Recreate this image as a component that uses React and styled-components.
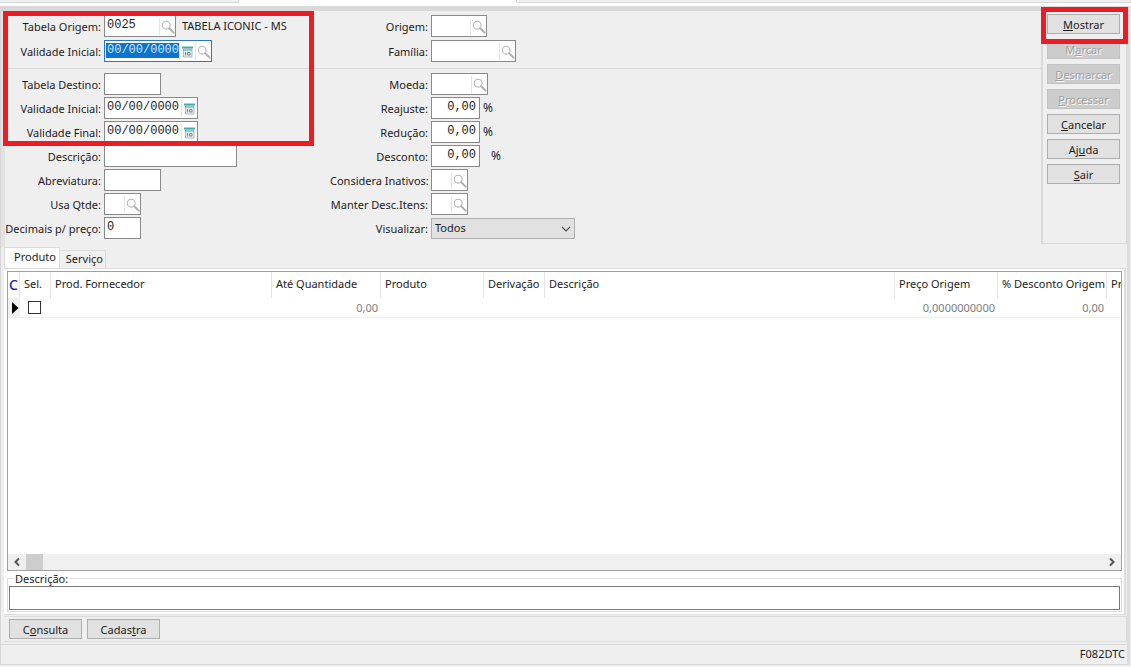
import React, { useState } from "react";
import styled, { createGlobalStyle } from "styled-components";

const GlobalStyle = createGlobalStyle`
  * {
    box-sizing: border-box;
  }
  body {
    margin: 0;
    background: #efefef;
    color: #1c1c1c;
    font-family: "Noto Sans", "Open Sans", sans-serif;
    font-size: 11px;
    line-height: 16px;
  }
  input, button, select {
    font: inherit;
    color: inherit;
    margin: 0;
    border-radius: 0;
  }
`;

const LoupeIcon = () => (
  <svg width="14" height="14" viewBox="0 0 14 14" fill="none" aria-hidden="true">
    <circle cx="5.2" cy="5.2" r="3.9" stroke="#b4b4b4" strokeWidth="1.1" />
    <path d="M8.2 8.2 L12.6 12.6" stroke="#b0b0b0" strokeWidth="2" strokeLinecap="round" />
  </svg>
);

const CalendarIcon = () => (
  <svg width="11" height="12" viewBox="0 0 11 12" aria-hidden="true">
    <path d="M0 .5h11v2H0z" fill="#3fb0b0" />
    <path d="M1.500 2.500h8.500v8.500H1.500z" fill="#e9f0f2" stroke="#a3bccb" strokeWidth="1" />
    <path d="M1 4h9" stroke="#3fa5a8" strokeWidth="1" />
    <path d="M3.500 6v3.500M5.500 6.500h2.500v2.500h-2.500z" fill="none" stroke="#76878f" strokeWidth="1" />
  </svg>
);

const ChevronIcon = ({ d, weight = 2 }) => (
  <svg width="10" height="10" viewBox="0 0 10 10" fill="none" aria-hidden="true">
    <path d={d} stroke="#555" strokeWidth={weight} />
  </svg>
);

function Field({ id, label, value = "", width, icons = [], right, focused, children }) {
  return (
    <Row>
      <Label htmlFor={id}>{label}</Label>
      <Box $width={width} $focused={focused}>
        <TextInput id={id} defaultValue={value} $right={right} $focused={focused} size="1" />
        {icons.map((icon) => (
          <IconButton key={icon} type="button" aria-label={icon}>
            {icon === "Calendário" ? <CalendarIcon /> : <LoupeIcon />}
          </IconButton>
        ))}
      </Box>
      {children}
    </Row>
  );
}

const FIND = ["Pesquisar"];
const DATE = ["Calendário"];

const actions = [
  ["", "M", "ostrar"],
  ["M", "a", "rcar", true],
  ["", "D", "esmarcar", true],
  ["", "P", "rocessar", true],
  ["", "C", "ancelar"],
  ["Aj", "u", "da"],
  ["", "S", "air"],
];

const columns = [
  ["Sel.", 31],
  ["Prod. Fornecedor", 221],
  ["Até Quantidade", 109],
  ["Produto", 103],
  ["Derivação", 61],
  ["Descrição", undefined],
  ["Preço Origem", 103],
  ["% Desconto Origem", 109],
  ["Pr", 14],
];

export default function App() {
  const [tab, setTab] = useState("Produto");
  return (
    <>
      <GlobalStyle />
      <Page>
        <WindowTabs>
          <span />
          <span />
          <span />
        </WindowTabs>
        <Window>
          <Top>
            <Form>
              <Section>
                <Column $label={96} $gap={3}>
                  <Field id="origem" label="Tabela Origem:" value="0025" width={72} icons={FIND}>
                    <Note>TABELA ICONIC - MS</Note>
                  </Field>
                  <Field
                    id="validade"
                    label="Validade Inicial:"
                    value="00/00/0000"
                    width={108}
                    icons={["Calendário", "Pesquisar"]}
                    focused
                  />
                </Column>
                <Column $label={98} $gap={3}>
                  <Field id="orig" label="Origem:" width={56} icons={FIND} />
                  <Field id="familia" label="Família:" width={85} icons={FIND} />
                </Column>
              </Section>
              <Section>
                <Column $label={96} $gap={2}>
                  <Field id="destino" label="Tabela Destino:" width={57} />
                  <Field id="inicial" label="Validade Inicial:" value="00/00/0000" width={94} icons={DATE} />
                  <Field id="final" label="Validade Final:" value="00/00/0000" width={94} icons={DATE} />
                  <Field id="descricao" label="Descrição:" width={133} />
                  <Field id="abreviatura" label="Abreviatura:" width={57} />
                  <Field id="qtde" label="Usa Qtde:" width={37} icons={FIND} />
                  <Field id="decimais" label="Decimais p/ preço:" value="0" width={37} />
                </Column>
                <Column $label={98} $gap={2}>
                  <Field id="moeda" label="Moeda:" width={57} icons={FIND} />
                  <Field id="reajuste" label="Reajuste:" value="0,00" width={49} right>
                    <Percent>%</Percent>
                  </Field>
                  <Field id="reducao" label="Redução:" value="0,00" width={49} right>
                    <Percent>%</Percent>
                  </Field>
                  <Field id="desconto" label="Desconto:" value="0,00" width={49} right>
                    <Percent $far>%</Percent>
                  </Field>
                  <Field id="inativos" label="Considera Inativos:" width={37} icons={FIND} />
                  <Field id="manter" label="Manter Desc.Itens:" width={37} icons={FIND} />
                  <Row>
                    <Label htmlFor="visualizar">Visualizar:</Label>
                    <SelectBox>
                      <Select id="visualizar">
                        <option>Todos</option>
                      </Select>
                      <ChevronIcon d="M1 3l4 4 4-4" weight={1.2} />
                    </SelectBox>
                  </Row>
                </Column>
              </Section>
              <FormMark />
            </Form>
            <Actions>
              {actions.map(([before, key, after, disabled]) => (
                <Button key={key + after} type="button" disabled={disabled}>
                  {before}
                  <u>{key}</u>
                  {after}
                </Button>
              ))}
              <ActionMark />
            </Actions>
          </Top>

          <Tabs role="tablist">
            {["Produto", "Serviço"].map((name) => (
              <Tab
                key={name}
                type="button"
                role="tab"
                aria-selected={tab === name}
                $active={tab === name}
                onClick={() => setTab(name)}
              >
                {name}
              </Tab>
            ))}
          </Tabs>

          <TabPanel>
            <Grid>
              <Table>
                <colgroup>
                  <col width="12" />
                  {columns.map(([name, width]) => (
                    <col key={name} width={width} />
                  ))}
                </colgroup>
                <thead>
                  <tr>
                    <Corner>C</Corner>
                    {columns.map(([name]) => (
                      <th key={name}>{name}</th>
                    ))}
                  </tr>
                </thead>
                <tbody>
                  <tr>
                    <Marker>
                      <svg width="7" height="12" viewBox="0 0 7 12" aria-hidden="true">
                        <path d="M0 0l6.500 6L0 12z" fill="#000" />
                      </svg>
                    </Marker>
                    <td>
                      <Check type="checkbox" aria-label="Sel." />
                    </td>
                    <td />
                    <Amount>0,00</Amount>
                    <td />
                    <td />
                    <td />
                    <Amount>0,0000000000</Amount>
                    <Amount>0,00</Amount>
                    <td />
                  </tr>
                </tbody>
              </Table>
              <ScrollBar>
                <ScrollArrow type="button" aria-label="Rolar para a esquerda">
                  <ChevronIcon d="M7 1.500L3.500 5l3.500 3.500" />
                </ScrollArrow>
                <Thumb />
                <ScrollArrow type="button" aria-label="Rolar para a direita">
                  <ChevronIcon d="M3 1.500l3.500 3.500-3.500 3.500" />
                </ScrollArrow>
              </ScrollBar>
            </Grid>
            <Details>
              <legend>
                <label htmlFor="detalhe">Descrição:</label>
              </legend>
              <input id="detalhe" />
            </Details>
          </TabPanel>

          <Footer>
            <Button type="button">
              C<u>o</u>nsulta
            </Button>
            <Button type="button">
              Cadas<u>t</u>ra
            </Button>
          </Footer>
          <Status>F082DTC</Status>
        </Window>
      </Page>
    </>
  );
}

const Page = styled.div`
  display: flex;
  flex-direction: column;
  min-height: 100vh;
  padding-bottom: 2px;
`;

const WindowTabs = styled.div`
  display: grid;
  grid-template-columns: 239px 278px 1fr;
  height: 6px;
  padding-bottom: 3px;
  background: #fff;
  span {
    background: #f0f0f0;
    border-bottom: 1px solid #d9d9d9;
    border-right: 1px solid #d9d9d9;
  }
  span:nth-child(2) {
    background: #fff;
    border-bottom-color: #fff;
  }
`;

const Window = styled.main`
  flex: 1;
  display: flex;
  flex-direction: column;
  margin-right: 1px;
  border: 1px solid #d6d6d6;
  border-top: 5px solid #d9d9d9;
  border-right: 3px solid #dcdcdc;
`;

const Top = styled.div`
  display: flex;
  height: 236px;
  border-left: 4px solid #e2e2e2;
`;

const Form = styled.form`
  flex: 1;
  position: relative;
  padding-top: 4px;
`;

const Section = styled.div`
  display: grid;
  grid-template-columns: 325px 1fr;
  & + & {
    margin-top: 6px;
    padding-top: 4px;
    border-top: 1px solid #d9d9d9;
  }
`;

const Column = styled.div`
  display: grid;
  row-gap: ${({ $gap }) => $gap}px;
  align-content: start;
  label {
    width: ${({ $label }) => $label}px;
  }
`;

const Row = styled.div`
  display: flex;
  align-items: center;
  gap: 3px;
  height: 22px;
`;

const Label = styled.label`
  flex: none;
  padding-top: 1px;
  text-align: right;
  white-space: nowrap;
`;

const Box = styled.div`
  display: flex;
  width: ${({ $width }) => $width}px;
  height: 22px;
  padding: 2px 0 1px 1px;
  background: #fff;
  border: 1px solid ${({ $focused }) => ($focused ? "#2a78c0" : "#8a8a8a")};
`;

const TextInput = styled.input`
  && {
    flex: 1;
    min-width: 0;
    width: 0;
    height: 15px;
    padding: 0 ${({ $right }) => ($right ? 3 : 0)}px 0 1px;
    border: 0;
    outline: 0;
    font-family: "Liberation Mono", monospace;
    font-size: 12px;
    line-height: 15px;
    text-align: ${({ $right }) => ($right ? "right" : "left")};
    background: ${({ $focused }) => ($focused ? "#0a74cf" : "transparent")};
    color: ${({ $focused }) => ($focused ? "#cfe6fa" : "#222")};
  }
`;

const IconButton = styled.button`
  display: flex;
  align-items: center;
  justify-content: center;
  flex: none;
  width: 16px;
  padding: 0;
  border: 0;
  border-left: 1px solid #e6e6e6;
  background: #fff;
`;

const Note = styled.span`
  margin-left: 3px;
`;

const Percent = styled.span`
  margin-left: ${({ $far }) => ($far ? 8 : 0)}px;
  font-size: 12px;
`;

const SelectBox = styled.div`
  position: relative;
  width: 144px;
  svg {
    position: absolute;
    right: 4px;
    top: 6px;
    pointer-events: none;
  }
`;

const Select = styled.select`
  display: block;
  appearance: none;
  width: 100%;
  height: 21px;
  padding: 0 3px;
  border: 1px solid #adadad;
  background: #e1e1e1;
`;

const Mark = styled.div`
  position: absolute;
  border: 5px solid #ec1c24;
  pointer-events: none;
`;

const FormMark = styled(Mark)`
  top: 0;
  left: -2px;
  width: 311px;
  height: 135px;
`;

const ActionMark = styled(Mark)`
  top: -4px;
  left: -2px;
  right: -2px;
  height: 37px;
`;

const Actions = styled.div`
  position: relative;
  display: flex;
  flex-direction: column;
  gap: 5px;
  width: 86px;
  height: 233px;
  padding: 3px 6px 0 4px;
  border-left: 2px solid #d9d9d9;
  border-right: 1px solid #d9d9d9;
  border-bottom: 1px solid #d9d9d9;
`;

const Button = styled.button`
  min-width: 73px;
  height: 20px;
  padding: 1px 0 0;
  line-height: 16px;
  background: #e1e1e1;
  border: 1px solid #adadad;
  &:disabled {
    color: #a0a0a0;
    background: #cccccc;
    border-color: #c2c2c2;
    text-shadow: 1px 1px 0 #fff;
  }
`;

const Tabs = styled.div`
  display: flex;
  align-items: flex-end;
  height: 21px;
  padding-left: 3px;
`;

const Tab = styled.button`
  height: ${({ $active }) => ($active ? 21 : 18)}px;
  padding: ${({ $active }) => ($active ? "0 3px 2px 9px" : "0 2px 1px 5px")};
  border: 1px solid #dcdcdc;
  border-bottom: 0;
  border-left-color: ${({ $active }) => ($active ? "#dcdcdc" : "transparent")};
  background: ${({ $active }) => ($active ? "#fff" : "#f0f0f0")};
`;

const TabPanel = styled.section`
  flex: 1;
  display: flex;
  flex-direction: column;
  margin: 0 1px 0 3px;
  padding: 2px 2px 2px 3px;
  background: #fff;
  border: 1px solid #dcdcdc;
  border-width: 1px 2px 1px 0;
`;

const Grid = styled.div`
  flex: 1;
  display: flex;
  flex-direction: column;
  justify-content: space-between;
  border: 1px solid #a0a0a0;
`;

const Table = styled.table`
  width: 100%;
  table-layout: fixed;
  border-collapse: separate;
  border-spacing: 0;
  th,
  td {
    height: 20px;
    padding: 0 3px 0 4px;
    overflow: hidden;
    white-space: nowrap;
    text-align: left;
    font-weight: 400;
    border-bottom: 1px solid #f0f0f0;
  }
  th {
    height: 26px;
    padding-bottom: 2px;
    border-bottom: 0;
    border-right: 1px solid #e6e6e6;
  }
  th:last-child {
    padding-right: 0;
    border-right: 0;
  }
`;

const Corner = styled.th`
  && {
    padding: 0 1px;
    color: #1a1ab8;
    font-size: 14px;
    font-weight: 500;
  }
`;

const Marker = styled.td`
  && {
    padding: 0 0 0 4px;
    background: #f0f0f0;
  }
  svg {
    display: block;
  }
`;

const Check = styled.input`
  && {
    appearance: none;
    display: block;
    width: 13px;
    height: 13px;
    margin: 0 0 0 4px;
    border: 1px solid #333;
    background: #fff;
  }
`;

const Amount = styled.td`
  && {
    color: #7d7d7d;
    text-align: right;
  }
`;

const ScrollBar = styled.div`
  display: flex;
  height: 16px;
  background: #f0f0f0;
`;

const ScrollArrow = styled.button`
  display: flex;
  align-items: center;
  justify-content: center;
  width: 18px;
  padding: 0;
  border: 0;
  background: transparent;
  &:last-child {
    margin-left: auto;
  }
`;

const Thumb = styled.div`
  width: 17px;
  background: #cdcdcd;
`;

const Details = styled.fieldset`
  min-width: 0;
  margin: 0;
  padding: 0 1px 1px;
  border: 1px solid #dcdcdc;
  legend {
    height: 15px;
    margin-left: 5px;
    padding: 0 1px;
  }
  label {
    display: block;
    line-height: 15px;
  }
  input {
    display: block;
    width: 100%;
    height: 24px;
    padding: 0 4px;
    border: 1px solid #7a7a7a;
    background: #fff;
  }
`;

const Footer = styled.div`
  display: flex;
  gap: 5px;
  margin: 1px 0 0 3px;
  padding: 2px 5px;
  border: 1px solid #dcdcdc;
  border-width: 1px 1px 1px 0;
`;

const Status = styled.footer`
  margin-top: 2px;
  height: 20px;
  padding: 1px 2px;
  border-top: 1px solid #d9d9d9;
  text-align: right;
`;
